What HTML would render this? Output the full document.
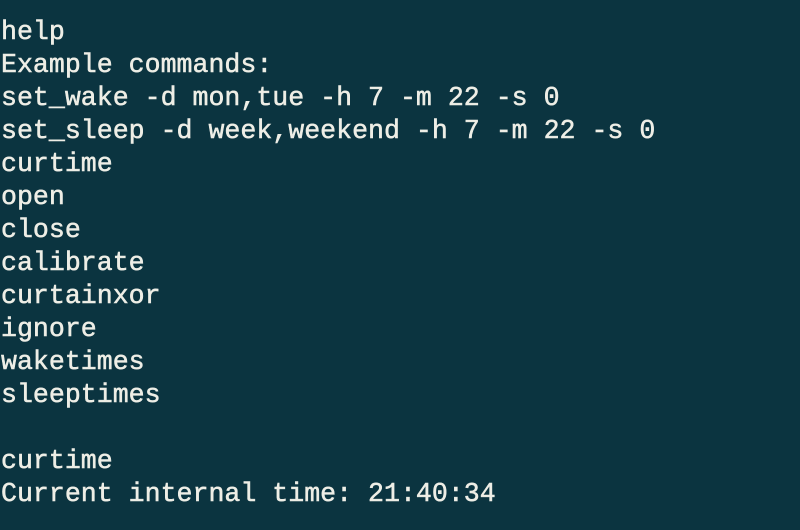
<!DOCTYPE html>
<html><head><meta charset="utf-8"><style>
html,body{margin:0;padding:0;width:800px;height:530px;overflow:hidden;background:#0b3440;}
pre{margin:0;position:absolute;left:1px;top:16px;font-family:"Liberation Mono",monospace;font-size:26.6px;line-height:33px;color:#eeeee6;-webkit-text-stroke:0.5px #eeeee6;}
</style></head><body><pre>help
Example commands:
set_wake -d mon,tue -h 7 -m 22 -s 0
set_sleep -d week,weekend -h 7 -m 22 -s 0
curtime
open
close
calibrate
curtainxor
ignore
waketimes
sleeptimes

curtime
Current internal time: 21:40:34</pre></body></html>
